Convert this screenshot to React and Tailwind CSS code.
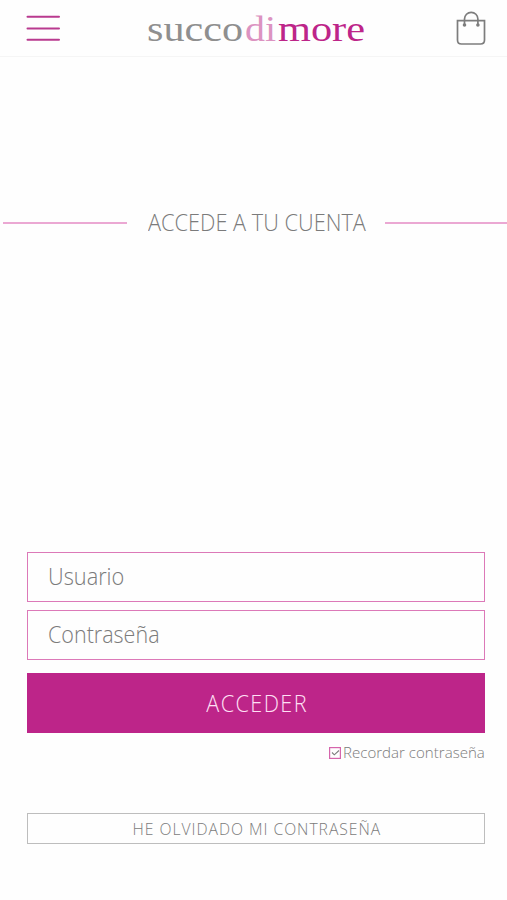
import React, { useState } from 'react';

function MenuIcon() {
  return (
    <svg width="34" height="28" viewBox="0 0 34 28" fill="none" stroke="#b93a8f" strokeWidth="2" strokeLinecap="round">
      <path d="M1.500 1.700h31.500M1.500 13.400h31.500M1.500 24.700h31.500" />
    </svg>
  );
}

function Logo() {
  return (
    <svg width="220" height="40" viewBox="0 0 220 40" fontFamily="'Liberation Serif', serif" fontSize="35">
      <text x="1" y="33" fill="#8f8f8f" textLength="96" lengthAdjust="spacingAndGlyphs">succo</text>
      <text x="99" y="33" fill="#dc93c1" textLength="31" lengthAdjust="spacingAndGlyphs">di</text>
      <text x="132" y="33" fill="#bd2589" textLength="87" lengthAdjust="spacingAndGlyphs">more</text>
    </svg>
  );
}

function BagIcon() {
  return (
    <svg width="30" height="36" viewBox="0 0 30 36" fill="none" stroke="#7d7d7d" strokeWidth="1.7">
      <path d="M1.500 10.700h27v19.300q0 4-4 4h-19q-4 0-4-4z" />
      <path d="M8.500 14.500V9a6.700 6.700 0 0 1 13.400 0v5.500" />
      <circle cx="8.500" cy="15" r="1.800" fill="#7d7d7d" stroke="none" />
      <circle cx="21.900" cy="15" r="1.800" fill="#7d7d7d" stroke="none" />
    </svg>
  );
}

export default function App() {
  const [remember, setRemember] = useState(true);

  return (
    <div className="h-[900px] w-[507px] overflow-hidden bg-[#fefefe] font-['Open_Sans',sans-serif] font-[350] text-[#7b7b7b]">
      <header className="flex h-[57px] items-start justify-between border-b border-[#f5f5f5] pl-[26px] pr-[21px]">
        <button className="mt-[15px] w-[34px]" aria-label="Menú"><MenuIcon /></button>
        <div className="mt-[8px] ml-[86px] mr-auto"><Logo /></div>
        <button className="mt-[10px]" aria-label="Bolsa"><BagIcon /></button>
      </header>

      <div className="mt-[149px] flex h-[33px] items-center pl-[3px]">
        <span className="h-[2px] w-[124px] bg-[#eba8d3]" />
        <h1 className="ml-[21px] w-[237px] whitespace-nowrap pb-px text-[23px] leading-[30px]">
          <span className="inline-block origin-left scale-x-[0.946]">ACCEDE A TU CUENTA</span>
        </h1>
        <span className="h-[2px] flex-1 bg-[#eba8d3]" />
      </div>

      <form className="mt-[313px] pl-[27px] pr-[22px]" onSubmit={(e) => e.preventDefault()}>
        <label className="flex h-[50px] items-center border-[1.5px] border-[#dc79b8] pb-[2px] pl-[20px] text-[23px]">
          <span className="inline-block origin-left scale-x-[0.946]">Usuario</span>
        </label>
        <label className="mt-[8px] flex h-[50px] items-center border-[1.5px] border-[#dc79b8] pb-[2px] pl-[20px] text-[23px]">
          <span className="inline-block origin-left scale-x-[0.935]">Contraseña</span>
        </label>
        <button className="mt-[13px] flex h-[60px] w-full items-center justify-center bg-[#bd2589] pl-[2px] text-[23px] tracking-[1.5px] text-[#ffe0f5]">
          <span className="inline-block scale-x-[0.94]">ACCEDER</span>
        </button>
        <button
          type="button"
          onClick={() => setRemember(!remember)}
          className="ml-auto mt-[9px] flex h-[22px] w-[156px] items-center whitespace-nowrap text-[15px]"
        >
          <svg className="mr-[2px] shrink-0" width="12" height="12" viewBox="0 0 12 12" fill="none">
            <rect x="0.600" y="0.600" width="10.800" height="10.800" stroke="#d565ac" strokeWidth="1.200" />
            {remember && <path d="M3 5.500l2.300 2.300L10 3.500" stroke="#7d7d7d" strokeWidth="1.100" />}
          </svg>
          <span className="inline-block origin-left scale-x-[1.005] pb-px">Recordar contraseña</span>
        </button>
        <button type="button" className="mt-[49px] flex h-[31px] w-full items-center justify-center border-[1.5px] border-[#bdbdbd] pl-px text-[16px] tracking-[1px]">
          <span className="inline-block scale-x-[0.98]">HE OLVIDADO MI CONTRASEÑA</span>
        </button>
      </form>
    </div>
  );
}
